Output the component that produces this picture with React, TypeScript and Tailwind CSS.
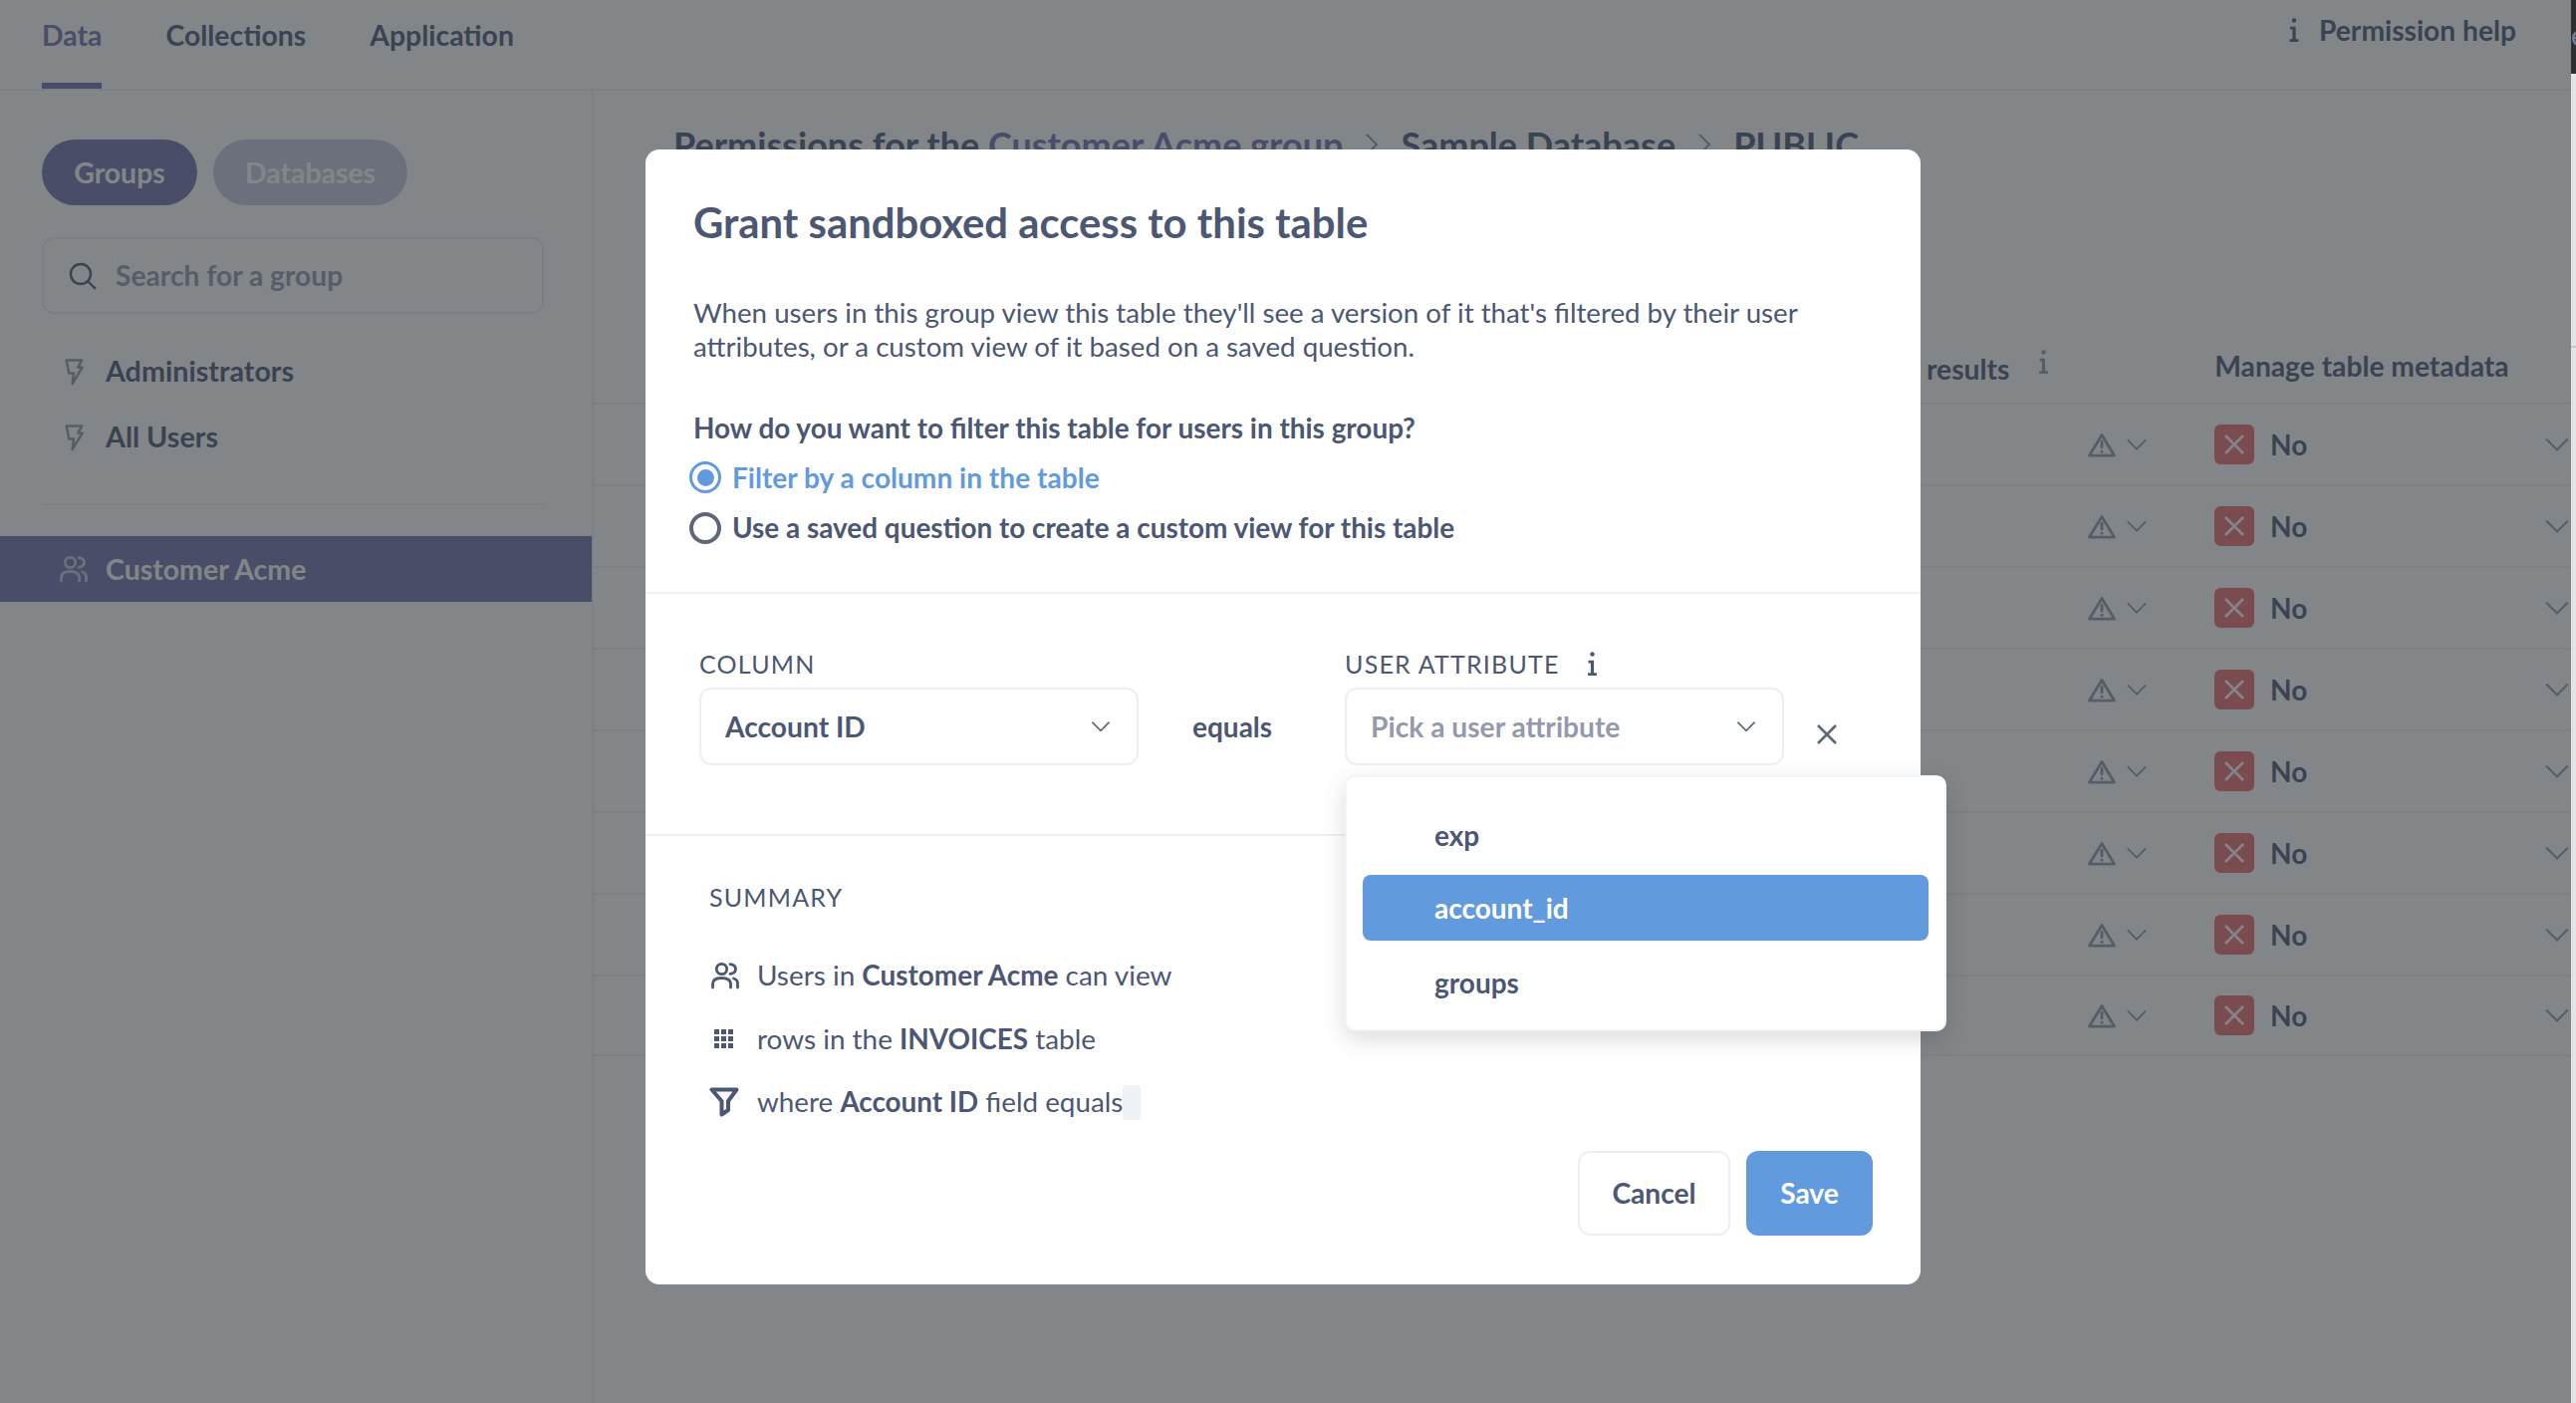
import React from "react";

const Chevron = ({ className = "" }: { className?: string }) => (
  <svg viewBox="0 0 24 14" fill="none" stroke="currentColor" strokeWidth="2" className={className}>
    <path d="M2 2 L12 12 L22 2" />
  </svg>
);
const Crumb = () => (
  <svg viewBox="0 0 14 24" fill="none" stroke="currentColor" strokeWidth="2" className="mx-[22px] inline-block h-[24px] w-[14px] text-[#949aab]">
    <path d="M2 2 L12 12 L2 22" />
  </svg>
);
const Info = ({ className = "" }: { className?: string }) => (
  <svg viewBox="0 0 12 30" fill="currentColor" className={className}>
    <circle cx="6" cy="3" r="2.8" />
    <path d="M1 11 H8 V26.5 H11.5 V30 H0.5 V26.5 H4 V14.5 H1 Z" />
  </svg>
);
const Bolt = ({ className = "" }: { className?: string }) => (
  <svg viewBox="0 0 20 28" fill="none" stroke="currentColor" strokeWidth="2.6" strokeLinejoin="round" className={className}>
    <path d="M2 1.5 H18 L14 9 H18.5 L8 26 L9.5 15 H4.5 Z" />
  </svg>
);
const Users = ({ className = "" }: { className?: string }) => (
  <svg viewBox="0 0 28 28" fill="none" stroke="currentColor" strokeWidth="2.8" strokeLinecap="round" className={className}>
    <circle cx="10.5" cy="7.5" r="5.2" />
    <path d="M1.5 26 V22.5 C1.5 18.5 5 16.5 10.5 16.5 C16 16.5 19.5 18.5 19.5 22.5 V26" />
    <path d="M19 2.6 C22.5 3 24.5 5 24.5 7.5 C24.5 10 22.5 12 19 12.4" />
    <path d="M22.5 17 C25 17.7 26.5 19.5 26.5 22 V26" />
  </svg>
);
const Grid = ({ className = "" }: { className?: string }) => (
  <svg viewBox="0 0 20 20" fill="currentColor" shapeRendering="crispEdges" className={className}>
    {[0, 7, 14].flatMap((y) =>
      [0, 7, 14].map((x) => <rect key={`${x}-${y}`} x={x} y={y} width="5" height="5" />)
    )}
  </svg>
);
const Funnel = ({ className = "" }: { className?: string }) => (
  <svg viewBox="0 0 30 30" fill="none" stroke="currentColor" strokeWidth="4" strokeLinejoin="round" className={className}>
    <path d="M2.5 2.5 H27.5 L19 14 V23 L12.5 27.5 V14 Z" />
  </svg>
);
const Warn = ({ className = "" }: { className?: string }) => (
  <svg viewBox="0 0 30 26" fill="none" stroke="currentColor" strokeWidth="3" strokeLinejoin="round" strokeLinecap="round" className={className}>
    <path d="M15 2.5 L28 24 H2 Z" />
    <path d="M15 9.5 V15.5 M15 20 V20.2" />
  </svg>
);
const Cross = ({ className = "" }: { className?: string }) => (
  <svg viewBox="0 0 20 20" fill="none" stroke="currentColor" strokeWidth="2.6" className={className}>
    <path d="M1 1 L19 19 M19 1 L1 19" />
  </svg>
);
const Search = ({ className = "" }: { className?: string }) => (
  <svg viewBox="0 0 28 28" fill="none" stroke="currentColor" strokeWidth="2.4" className={className}>
    <circle cx="12" cy="12" r="10" />
    <path d="M19 19 L27 27" />
  </svg>
);

const rows = [0, 1, 2, 3, 4, 5, 6, 7];

export default function App() {
  return (
    <div className="relative flex h-[1408px] w-[2586px] overflow-hidden bg-white font-['Lato',sans-serif] text-[#4c5773]">
      <div className="flex w-[2581px] flex-col">
        <header className="flex h-[91px] items-start justify-between border-b-2 border-[#f0f0f0] pl-[42px] pr-[55px]">
          <nav className="flex gap-[64px] text-[28.4px] font-bold leading-[70px]">
            <a className="h-[89px] border-b-[6px] border-[#7172ad] text-[#7172ad]">Data</a>
            <a>Collections</a>
            <a>Application</a>
          </nav>
          <div className="flex items-center gap-[19px] text-[28.2px] font-bold leading-[60px]">
            <Info className="h-[24px] w-[12px]" />
            <span>Permission help</span>
          </div>
        </header>
        <div className="flex flex-1">
          <aside className="w-[596px] border-r-2 border-[#f0f0f0] pt-[49px]">
            <div className="flex gap-[16px] px-[42px] text-[28.4px] font-bold">
              <div className="flex h-[66px] w-[156px] items-center justify-center rounded-full bg-[#7172ad] text-white">Groups</div>
              <div className="flex h-[66px] w-[195px] items-center justify-center rounded-full bg-[#c9c8e0] text-white">Databases</div>
            </div>
            <div className="ml-[42px] mr-[48px] mt-[32px] flex h-[77px] items-center gap-[19px] rounded-[12px] border-2 border-[#eeeef0] pl-[25px] text-[28.2px] font-bold text-[#949aab]">
              <Search className="h-[28px] w-[28px] text-[#4c5773]" />
              <span>Search for a group</span>
            </div>
            <div className="mt-[25px] flex h-[66px] items-center pl-[64px] text-[28.7px] font-bold">
              <Bolt className="mr-[21px] h-[27px] w-[21px] text-[#949aab]" />
              <span>Administrators</span>
            </div>
            <div className="flex h-[66px] items-center pl-[64px] text-[28.7px] font-bold">
              <Bolt className="mr-[21px] h-[27px] w-[21px] text-[#949aab]" />
              <span>All Users</span>
            </div>
            <div className="ml-[42px] mr-[48px] mt-[33px] border-t-2 border-[#f0f0f0]" />
            <div className="mt-[31px] flex h-[66px] items-center bg-[#7172ad] pl-[60px] text-[28.5px] font-bold text-white">
              <Users className="mr-[18px] h-[28px] w-[28px] opacity-60" />
              <span>Customer Acme</span>
            </div>
          </aside>
          <main className="flex-1">
            <h2 className="flex items-center whitespace-nowrap pl-[80px] pt-[32px] text-[36px] font-bold leading-[44px]">
              <span className="whitespace-pre">Permissions for the <span className="text-[#7172ad]">Customer Acme group</span></span>
              <Crumb />
              <span>Sample Database</span>
              <Crumb />
              <span>PUBLIC</span>
            </h2>
            <div className="mt-[178px] flex h-[59px] items-center text-[28.2px] font-bold">
              <span className="ml-[1338px] mt-[-9px]">results</span>
              <Info className="ml-[29px] mt-[-23px] h-[24px] w-[11px] text-[#949aab]" />
              <span className="ml-[166px] mt-[-14px]">Manage table metadata</span>
            </div>
            {rows.map((r) => (
              <div key={r} className="flex h-[82px] items-center border-t-2 border-[#f0f0f0] pl-[1499px] text-[28px] font-bold last:border-b-2">
                <Warn className="h-[25px] w-[30px] text-[#949aab]" />
                <Chevron className="ml-[9px] h-[14px] w-[22px] text-[#949aab]" />
                <div className="ml-[67px] flex h-[40px] w-[40px] items-center justify-center rounded-[6px] bg-[#ed6e6e]">
                  <Cross className="h-[20px] w-[20px] text-white" />
                </div>
                <span className="ml-[16px]">No</span>
                <div className="flex-1" />
                <Chevron className="mr-[1px] h-[16px] w-[26px] text-[#949aab]" />
              </div>
            ))}
          </main>
        </div>
      </div>
      <div className="flex w-[5px] flex-col overflow-hidden bg-[#e4e4e4]">
        <div className="h-[74px] shrink-0 bg-[#2e2e30] pt-[18px] text-[28px] leading-[34px] text-[#7d8494]">e</div>
        <div className="mt-[273px] h-[2px] shrink-0 bg-[#c9c9c9]" />
      </div>

      <div className="absolute inset-y-0 left-0 w-[2581px] bg-[rgba(46,53,59,0.6)]" />

      <div className="absolute left-[648px] top-[150px] flex h-[1139px] w-[1280px] flex-col rounded-[14px] bg-white">
        <section className="h-[446px] border-b-2 border-[#f0f0f0] px-[48px] pt-[50px]">
          <h1 className="text-[41.8px] font-bold leading-[46px]">Grant sandboxed access to this table</h1>
          <p className="mt-[51px] text-[27.7px] leading-[34px]">
            When users in this group view this table they'll see a version of it that's filtered by their user
            <br />
            attributes, or a custom view of it based on a saved question.
          </p>
          <p className="mt-[47px] text-[27.9px] font-bold leading-[34px]">How do you want to filter this table for users in this group?</p>
          <div className="mt-[16px] flex h-[34px] items-center gap-[11px] text-[28.1px] font-bold text-[#629bdd]">
            <span className="ml-[-4px] flex h-[32px] w-[32px] items-center justify-center rounded-full border-[3px] border-[#629bdd]">
              <span className="h-[17px] w-[17px] rounded-full bg-[#629bdd]" />
            </span>
            <span>Filter by a column in the table</span>
          </div>
          <div className="mt-[17px] flex h-[34px] items-center gap-[11px] text-[27.9px] font-bold">
            <span className="ml-[-4px] h-[32px] w-[32px] rounded-full border-4 border-[#5f6675]" />
            <span>Use a saved question to create a custom view for this table</span>
          </div>
        </section>

        <section className="flex h-[243px] items-start border-b-2 border-[#f0f0f0] pl-[54px] pt-[56px]">
          <div className="w-[441px]">
            <div className="text-[25px] leading-[28px] tracking-[1.2px]">COLUMN</div>
            <div className="mt-[10px] flex h-[78px] items-center justify-between rounded-[12px] border-2 border-[#eeeff1] pl-[24px] pr-[25px] text-[28.2px] font-bold">
              <span>Account ID</span>
              <Chevron className="h-[12px] w-[22px] text-[#5f6675]" />
            </div>
          </div>
          <div className="ml-[54px] mt-[38px] flex h-[78px] items-center text-[28px] font-bold">equals</div>
          <div className="ml-[73px] w-[441px]">
            <div className="flex items-center gap-[27px] text-[25px] leading-[28px] tracking-[1.2px]">
              USER ATTRIBUTE
              <Info className="h-[24px] w-[11px]" />
            </div>
            <div className="mt-[10px] flex h-[78px] items-center justify-between rounded-[12px] border-2 border-[#eeeff1] pl-[24px] pr-[25px] text-[28.2px] font-bold text-[#949aab]">
              <span>Pick a user attribute</span>
              <Chevron className="h-[12px] w-[22px] text-[#5f6675]" />
            </div>
          </div>
          <Cross className="ml-[33px] mt-[75px] h-[20px] w-[20px] text-[#5f6675]" />
        </section>

        <section className="flex-1 pl-[64px] pt-[46px]">
          <div className="text-[25px] leading-[30px] tracking-[1.2px]">SUMMARY</div>
          <div className="mt-[44px] flex h-[40px] items-center text-[27.9px]">
            <Users className="ml-[2px] mr-[18px] h-[28px] w-[28px]" />
            <span>Users in <b>Customer Acme</b> can view</span>
          </div>
          <div className="mt-[24px] flex h-[40px] items-center text-[27.9px]">
            <Grid className="ml-[5px] mr-[23px] h-[20px] w-[20px]" />
            <span>rows in the <b>INVOICES</b> table</span>
          </div>
          <div className="mt-[23px] flex h-[40px] items-center text-[27.8px]">
            <Funnel className="mr-[18px] h-[30px] w-[30px]" />
            <span>where <b>Account ID</b> field equals</span>
            <span className="h-[35px] w-[18px] rounded-[4px] bg-[#eef2f5]" />
          </div>
          <div className="mt-[29px] flex justify-end gap-[16px] pr-[48px] text-[28.2px] font-bold">
            <button className="h-[85px] w-[153px] rounded-[12px] border-2 border-[#eeeff1] bg-white">Cancel</button>
            <button className="h-[85px] w-[127px] rounded-[12px] bg-[#629bdd] text-white">Save</button>
          </div>
        </section>
      </div>

      <div className="absolute left-[1350px] top-[778px] h-[257px] w-[604px] rounded-[10px] border-2 border-[#f2f4f6] bg-white px-[16px] pt-[25px] text-[28px] font-bold shadow-[0_8px_24px_rgba(0,0,0,0.14)]">
        <div className="flex h-[66px] items-center rounded-[8px] pl-[72px]">exp</div>
        <div className="mt-[7px] flex h-[66px] items-center rounded-[8px] bg-[#629bdd] pl-[72px] text-white">account_id</div>
        <div className="flex h-[84px] items-center rounded-[8px] pl-[72px]">groups</div>
      </div>
    </div>
  );
}
